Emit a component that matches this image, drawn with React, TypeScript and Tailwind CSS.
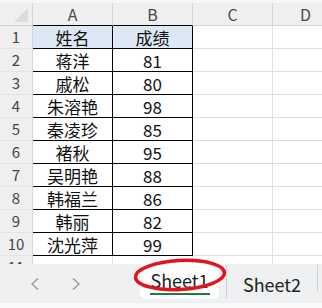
import React from "react";

const rows: [string, string][] = [
  ["姓名", "成绩"],
  ["蒋洋", "81"],
  ["戚松", "80"],
  ["朱溶艳", "98"],
  ["秦凌珍", "85"],
  ["褚秋", "95"],
  ["吴明艳", "88"],
  ["韩福兰", "86"],
  ["韩丽", "82"],
  ["沈光萍", "99"],
  ["", ""],
];

const font = { fontFamily: '"Noto Sans CJK SC", "Noto Sans", sans-serif' };

export default function App() {
  return (
    <div
      className="relative w-[322px] h-[308px] bg-white overflow-hidden flex flex-col"
      style={font}
    >
      <div className="h-[264px] overflow-hidden flex flex-col shrink-0">
        <div className="h-[3px] bg-[#f6f6f6] shrink-0" />
        {/* column headers */}
        <div className="h-[23px] flex shrink-0 bg-[#efefef]">
          <div className="relative w-[33px] shrink-0 border-r border-b border-[#d4d4d4]">
            <div className="absolute right-[4px] bottom-[3px] w-0 h-0 border-l-[14px] border-l-transparent border-b-[14px] border-b-[#dcdcdc]" />
          </div>
          {["A", "B"].map((c) => (
            <div
              key={c}
              className="w-[80px] shrink-0 border-r border-b border-r-[#d4d4d4] border-b-black flex items-center justify-center text-[16px] text-[#4a4a4a]"
            >
              {c}
            </div>
          ))}
          <div className="w-[80px] shrink-0 border-r border-b border-[#d4d4d4] flex items-center justify-center text-[16px] text-[#4a4a4a]">
            C
          </div>
          <div className="flex-1 border-b border-[#d4d4d4] flex items-center justify-center text-[16px] text-[#4a4a4a] pl-[16px]">
            D
          </div>
        </div>
        {rows.map(([a, b], i) => {
          const inTable = i < 10;
          const cellBorder = inTable ? "border-black" : "border-[#e0e0e0]";
          const bg = i === 0 ? "bg-[#dde8f4]" : "bg-white";
          return (
            <div key={i} className="h-[23px] flex shrink-0">
              <div className="w-[33px] shrink-0 bg-[#efefef] border-r border-b border-r-[#d4d4d4] border-b-[#e4e4e4] flex items-center justify-center text-[15px] text-[#444]">
                {i + 1}
              </div>
              <div
                className={`w-[80px] shrink-0 border-r border-b ${cellBorder} ${bg} flex items-center justify-center pt-[2px] text-[17px] text-[#111]`}
              >
                {a}
              </div>
              <div
                className={`w-[80px] shrink-0 border-r border-b ${cellBorder} ${bg} flex items-center justify-center pt-[2px] text-[17px] text-[#111]`}
              >
                {b}
              </div>
              <div className="w-[80px] shrink-0 border-r border-b border-[#e0e0e0]" />
              <div className="flex-1 border-b border-[#e0e0e0]" />
            </div>
          );
        })}
      </div>

      {/* sheet tab bar */}
      <div className="h-[39px] shrink-0 bg-[#eef0f2] flex items-start">
        <div className="w-[140px] h-full shrink-0 flex items-center">
          <svg width="10" height="14" viewBox="0 0 10 14" className="ml-[30px] mt-[1px]">
            <polyline points="8,1.5 2,7 8,12.5" fill="none" stroke="#9a9a9a" strokeWidth="1.4" />
          </svg>
          <svg width="10" height="14" viewBox="0 0 10 14" className="ml-[31px] mt-[1px]">
            <polyline points="2,1.5 8,7 2,12.5" fill="none" stroke="#9a9a9a" strokeWidth="1.4" />
          </svg>
        </div>
        <div className="w-[79px] h-[35px] shrink-0 bg-white rounded-b-[6px] flex flex-col items-center">
          <div className="h-[29px] flex items-center text-[18px] text-[#222] leading-none pt-[2px]">
            Sheet1
          </div>
          <div className="w-[60px] h-[2px] bg-[#1f7a45]" />
        </div>
        <div className="w-px h-[33px] mt-[1px] ml-[7px] bg-[#cfd2d6] shrink-0" />
        <div className="w-[90px] h-[39px] shrink-0 flex items-center justify-center text-[18px] text-[#222] leading-none pt-[1px]">
          Sheet2
        </div>
        <div className="w-px h-[27px] mt-[1px] bg-[#cfd2d6] shrink-0" />
      </div>
      <div className="flex-1 bg-[#f8f9fa]" />

      {/* red ellipse annotation */}
      <svg
        className="absolute left-[129px] top-[255px] pointer-events-none"
        width="102"
        height="40"
        viewBox="0 0 102 40"
      >
        <ellipse
          cx="51"
          cy="20"
          rx="44.5"
          ry="14.5"
          fill="none"
          stroke="#e4141c"
          strokeWidth="3.5"
          transform="rotate(-3 51 20)"
        />
      </svg>
    </div>
  );
}
